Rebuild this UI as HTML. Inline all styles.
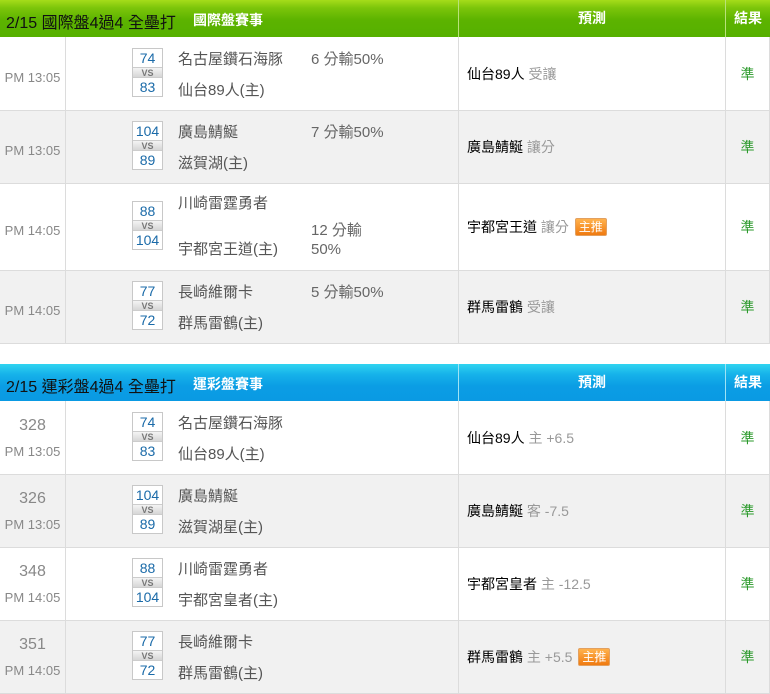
<!DOCTYPE html>
<html><head><meta charset="utf-8"><style>
*{margin:0;padding:0;box-sizing:border-box}
body{width:770px;height:694px;background:#fff;font-family:"Liberation Sans","Noto Sans CJK TC",sans-serif;position:relative;overflow:hidden}
.hd{position:absolute;left:0;width:770px;height:37px;color:#fff}
.g{background:linear-gradient(#a6dc1a 0,#7cc50a 8px,#5cb300 20px,#56b000 100%);}
.b{background:linear-gradient(#2fd4f0 0,#17b3ea 10px,#0b9de4 22px,#0a9ae3 100%);}
.hd .t{position:absolute;left:6px;top:9px;font-size:16px;color:#111}
.hd .s{position:absolute;left:193px;top:10px;font-size:14px;font-weight:bold;color:#fff}
.hd .p{position:absolute;left:458px;width:267px;top:0;height:37px;border-left:1px solid #b9e27a;text-align:center;line-height:37px;font-size:14px;font-weight:bold}
.hd .r{position:absolute;left:725px;width:45px;top:0;height:37px;border-left:1px solid #b9e27a;text-align:center;line-height:37px;font-size:14px;font-weight:bold}
.b .p,.b .r{border-left-color:#9fe3f5}
.row{position:absolute;left:0;width:770px;border-bottom:1px solid #dcdcdc;background:#fff}
.row.gr{background:#f1f1f1}
.row .c1{position:absolute;left:65px;top:0;bottom:0;border-left:1px solid #dcdcdc}
.row .c2{position:absolute;left:458px;top:0;bottom:0;border-left:1px solid #dcdcdc}
.row .c3{position:absolute;left:725px;top:0;bottom:0;border-left:1px solid #dcdcdc}
.row .c4{position:absolute;left:769px;top:0;bottom:0;border-left:1px solid #dcdcdc}
.tm{position:absolute;left:0;width:65px;text-align:center;font-size:13px;color:#888;line-height:14px}
.num{position:absolute;left:0;width:65px;text-align:center;font-size:16px;color:#888;line-height:18px}
.box{position:absolute;left:132px;width:31px;height:49px;border:1px solid #c8c8c8;background:#fff;font-size:14px;color:#1a6aa8;text-align:center}
.box div{height:18px;line-height:18px}
.box .vs{height:11px;line-height:11px;font-size:9px;font-weight:bold;color:#777;background:linear-gradient(#f4f4f4,#d6d6d6);border-top:1px solid #ccc;border-bottom:1px solid #ccc}
.nm{position:absolute;left:178px;font-size:15px;color:#555;line-height:18px;white-space:nowrap}
.od{position:absolute;left:311px;font-size:15px;color:#666;line-height:18px;white-space:nowrap}
.pr{position:absolute;left:467px;font-size:14px;color:#000;line-height:18px;white-space:nowrap}
.pr span.g2{color:#999}
.tag{display:inline-block;background:linear-gradient(#ffb24d,#f07a10);color:#fff;font-size:12px;line-height:16px;padding:0 3px;border-radius:2px;border:1px solid #e2a060;vertical-align:1px;margin-left:2px}
.ok{position:absolute;left:725px;width:45px;text-align:center;color:#2b9a2b;font-size:14px;line-height:18px}
</style></head><body>

<div class="hd g" style="top:0"><span class="t">2/15 國際盤4過4 全壘打</span><span class="s">國際盤賽事</span><div class="p">預測</div><div class="r">結果</div></div>

<div class="row" style="top:37px;height:74px"><i class="c1"></i><i class="c2"></i><i class="c3"></i><i class="c4"></i>
<div class="tm" style="top:34px">PM 13:05</div>
<div class="box" style="top:11px"><div>74</div><div class="vs">VS</div><div>83</div></div>
<div class="nm" style="top:14px">名古屋鑽石海豚</div><div class="nm" style="top:45px">仙台89人(主)</div>
<div class="od" style="top:14px">6 分輸50%</div>
<div class="pr" style="top:28px">仙台89人 <span class="g2">受讓</span></div>
<div class="ok" style="top:28px">準</div></div>

<div class="row gr" style="top:111px;height:73px"><i class="c1"></i><i class="c2"></i><i class="c3"></i><i class="c4"></i>
<div class="tm" style="top:33px">PM 13:05</div>
<div class="box" style="top:10px"><div>104</div><div class="vs">VS</div><div>89</div></div>
<div class="nm" style="top:13px">廣島鯖鯅</div><div class="nm" style="top:44px">滋賀湖(主)</div>
<div class="od" style="top:13px">7 分輸50%</div>
<div class="pr" style="top:27px">廣島鯖鯅 <span class="g2">讓分</span></div>
<div class="ok" style="top:27px">準</div></div>

<div class="row" style="top:184px;height:87px"><i class="c1"></i><i class="c2"></i><i class="c3"></i><i class="c4"></i>
<div class="tm" style="top:40px">PM 14:05</div>
<div class="box" style="top:17px"><div>88</div><div class="vs">VS</div><div>104</div></div>
<div class="nm" style="top:11px">川崎雷霆勇者</div><div class="nm" style="top:57px">宇都宮王道(主)</div>
<div class="od" style="top:38px">12 分輸</div><div class="od" style="top:57px">50%</div>
<div class="pr" style="top:34px">宇都宮王道 <span class="g2">讓分</span> <span class="tag">主推</span></div>
<div class="ok" style="top:34px">準</div></div>

<div class="row gr" style="top:271px;height:73px"><i class="c1"></i><i class="c2"></i><i class="c3"></i><i class="c4"></i>
<div class="tm" style="top:33px">PM 14:05</div>
<div class="box" style="top:10px"><div>77</div><div class="vs">VS</div><div>72</div></div>
<div class="nm" style="top:13px">長崎維爾卡</div><div class="nm" style="top:44px">群馬雷鶴(主)</div>
<div class="od" style="top:13px">5 分輸50%</div>
<div class="pr" style="top:27px">群馬雷鶴 <span class="g2">受讓</span></div>
<div class="ok" style="top:27px">準</div></div>

<div class="hd b" style="top:364px"><span class="t">2/15 運彩盤4過4 全壘打</span><span class="s">運彩盤賽事</span><div class="p">預測</div><div class="r">結果</div></div>

<div class="row" style="top:401px;height:74px"><i class="c1"></i><i class="c2"></i><i class="c3"></i><i class="c4"></i>
<div class="num" style="top:16px">328</div><div class="tm" style="top:44px">PM 13:05</div>
<div class="box" style="top:11px"><div>74</div><div class="vs">VS</div><div>83</div></div>
<div class="nm" style="top:14px">名古屋鑽石海豚</div><div class="nm" style="top:45px">仙台89人(主)</div>
<div class="pr" style="top:28px">仙台89人 <span class="g2">主 +6.5</span></div>
<div class="ok" style="top:28px">準</div></div>

<div class="row gr" style="top:475px;height:73px"><i class="c1"></i><i class="c2"></i><i class="c3"></i><i class="c4"></i>
<div class="num" style="top:15px">326</div><div class="tm" style="top:43px">PM 13:05</div>
<div class="box" style="top:10px"><div>104</div><div class="vs">VS</div><div>89</div></div>
<div class="nm" style="top:13px">廣島鯖鯅</div><div class="nm" style="top:44px">滋賀湖星(主)</div>
<div class="pr" style="top:27px">廣島鯖鯅 <span class="g2">客 -7.5</span></div>
<div class="ok" style="top:27px">準</div></div>

<div class="row" style="top:548px;height:73px"><i class="c1"></i><i class="c2"></i><i class="c3"></i><i class="c4"></i>
<div class="num" style="top:15px">348</div><div class="tm" style="top:43px">PM 14:05</div>
<div class="box" style="top:10px"><div>88</div><div class="vs">VS</div><div>104</div></div>
<div class="nm" style="top:13px">川崎雷霆勇者</div><div class="nm" style="top:44px">宇都宮皇者(主)</div>
<div class="pr" style="top:27px">宇都宮皇者 <span class="g2">主 -12.5</span></div>
<div class="ok" style="top:27px">準</div></div>

<div class="row gr" style="top:621px;height:73px"><i class="c1"></i><i class="c2"></i><i class="c3"></i><i class="c4"></i>
<div class="num" style="top:15px">351</div><div class="tm" style="top:43px">PM 14:05</div>
<div class="box" style="top:10px"><div>77</div><div class="vs">VS</div><div>72</div></div>
<div class="nm" style="top:13px">長崎維爾卡</div><div class="nm" style="top:44px">群馬雷鶴(主)</div>
<div class="pr" style="top:27px">群馬雷鶴 <span class="g2">主 +5.5</span> <span class="tag">主推</span></div>
<div class="ok" style="top:27px">準</div></div>

</body></html>
